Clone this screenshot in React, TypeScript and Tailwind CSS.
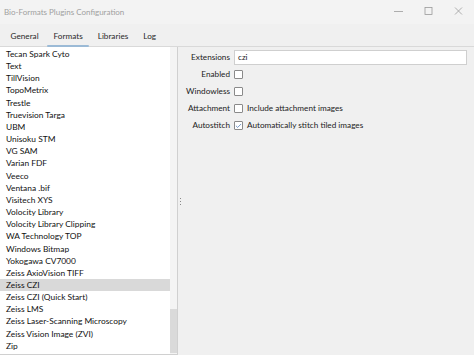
import { Check } from "lucide-react";

const formats = [
  "Tecan Spark Cyto",
  "Text",
  "TillVision",
  "TopoMetrix",
  "Trestle",
  "Truevision Targa",
  "UBM",
  "Unisoku STM",
  "VG SAM",
  "Varian FDF",
  "Veeco",
  "Ventana .bif",
  "Visitech XYS",
  "Volocity Library",
  "Volocity Library Clipping",
  "WA Technology TOP",
  "Windows Bitmap",
  "Yokogawa CV7000",
  "Zeiss AxioVision TIFF",
  "Zeiss CZI",
  "Zeiss CZI (Quick Start)",
  "Zeiss LMS",
  "Zeiss Laser-Scanning Microscopy",
  "Zeiss Vision Image (ZVI)",
  "Zip",
];

const tabs = ["General", "Formats", "Libraries", "Log"];

function Box({ checked }: { checked?: boolean }) {
  return (
    <span className="w-[9px] h-[9px] border border-[#8a8a8a] bg-white rounded-[1px] flex items-center justify-center shrink-0">
      {checked && <Check size={8} strokeWidth={2.2} className="text-[#2a5fa8]" />}
    </span>
  );
}

function Row({ label, children }: { label: string; children: React.ReactNode }) {
  return (
    <div className="flex items-center h-[15px]">
      <div className="w-[50px] text-right pr-[4px] shrink-0 whitespace-nowrap">{label}</div>
      {children}
    </div>
  );
}

export default function App() {
  return (
    <div
      className="w-[474px] h-[355px] bg-[#f0f0f0] text-[#111] text-[8.4px] flex flex-col overflow-hidden"
      style={{ fontFamily: 'Lato, "Noto Sans", sans-serif' }}
    >
      {/* title bar */}
      <div className="h-[24px] flex items-center bg-[#f3f3f3] shrink-0">
        <div className="pl-[4px] text-[#a0a0a0] text-[8px] flex-1">Bio-Formats Plugins Configuration</div>
        <div className="flex items-center text-[#9a9a9a]">
          <svg width="30" height="24" viewBox="0 0 30 24">
            <line x1="10" y1="11.5" x2="19" y2="11.5" stroke="currentColor" strokeWidth="0.8" />
          </svg>
          <svg width="30" height="24" viewBox="0 0 30 24">
            <rect x="11" y="7.5" width="7" height="7" fill="none" stroke="currentColor" strokeWidth="0.8" />
          </svg>
          <svg width="30" height="24" viewBox="0 0 30 24">
            <path d="M11 7.5 L18 14.5 M18 7.5 L11 14.5" stroke="currentColor" strokeWidth="0.8" />
          </svg>
        </div>
      </div>

      {/* tabs */}
      <div className="h-[23px] flex items-end border-b border-[#d9d9d9] shrink-0 pl-[3px] text-[8.2px]">
        {tabs.map((t) => (
          <div key={t} className="relative px-[7.5px] pb-[4px] text-[#2a2a2a]">
            {t}
            {t === "Formats" && (
              <span className="absolute left-[1px] right-[1px] bottom-[-1px] h-[2px] bg-[#9bbad6] rounded" />
            )}
          </div>
        ))}
      </div>

      <div className="flex flex-1 min-h-0">
        {/* list */}
        <div className="w-[178px] flex bg-white border-r border-[#d0d0d0] border-b">
          <div className="flex-1 pt-[1px]">
            {formats.map((f) => (
              <div
                key={f}
                className={`h-[12.17px] leading-[12px] pl-[6px] whitespace-nowrap ${f === "Zeiss CZI" ? "bg-[#d9d9d9]" : ""}`}
              >
                {f}
              </div>
            ))}
          </div>
          <div className="w-[7px] bg-[#f4f4f4] flex flex-col justify-end pb-[1px]">
            <div className="h-[44px] bg-[#dadada]" />
          </div>
        </div>

        {/* splitter */}
        <div className="w-[4px] flex flex-col items-center justify-center gap-[2px]">
          <span className="w-[1px] h-[1px] bg-[#888]" />
          <span className="w-[1px] h-[1px] bg-[#888]" />
          <span className="w-[1px] h-[1px] bg-[#888]" />
        </div>

        {/* details */}
        <div className="flex-1 flex flex-col gap-[2px] pt-[3px] pl-[2px] pr-[7px] text-[#222] text-[8.2px]">
          <Row label="Extensions">
            <div className="flex-1 h-[15px] bg-white border border-[#cfcfcf] flex items-center pl-[3px]">czi</div>
          </Row>
          <Row label="Enabled">
            <Box />
          </Row>
          <Row label="Windowless">
            <Box />
          </Row>
          <Row label="Attachment">
            <Box />
            <span className="pl-[4px]">Include attachment images</span>
          </Row>
          <Row label="Autostitch">
            <Box checked />
            <span className="pl-[4px]">Automatically stitch tiled images</span>
          </Row>
        </div>
      </div>
    </div>
  );
}
